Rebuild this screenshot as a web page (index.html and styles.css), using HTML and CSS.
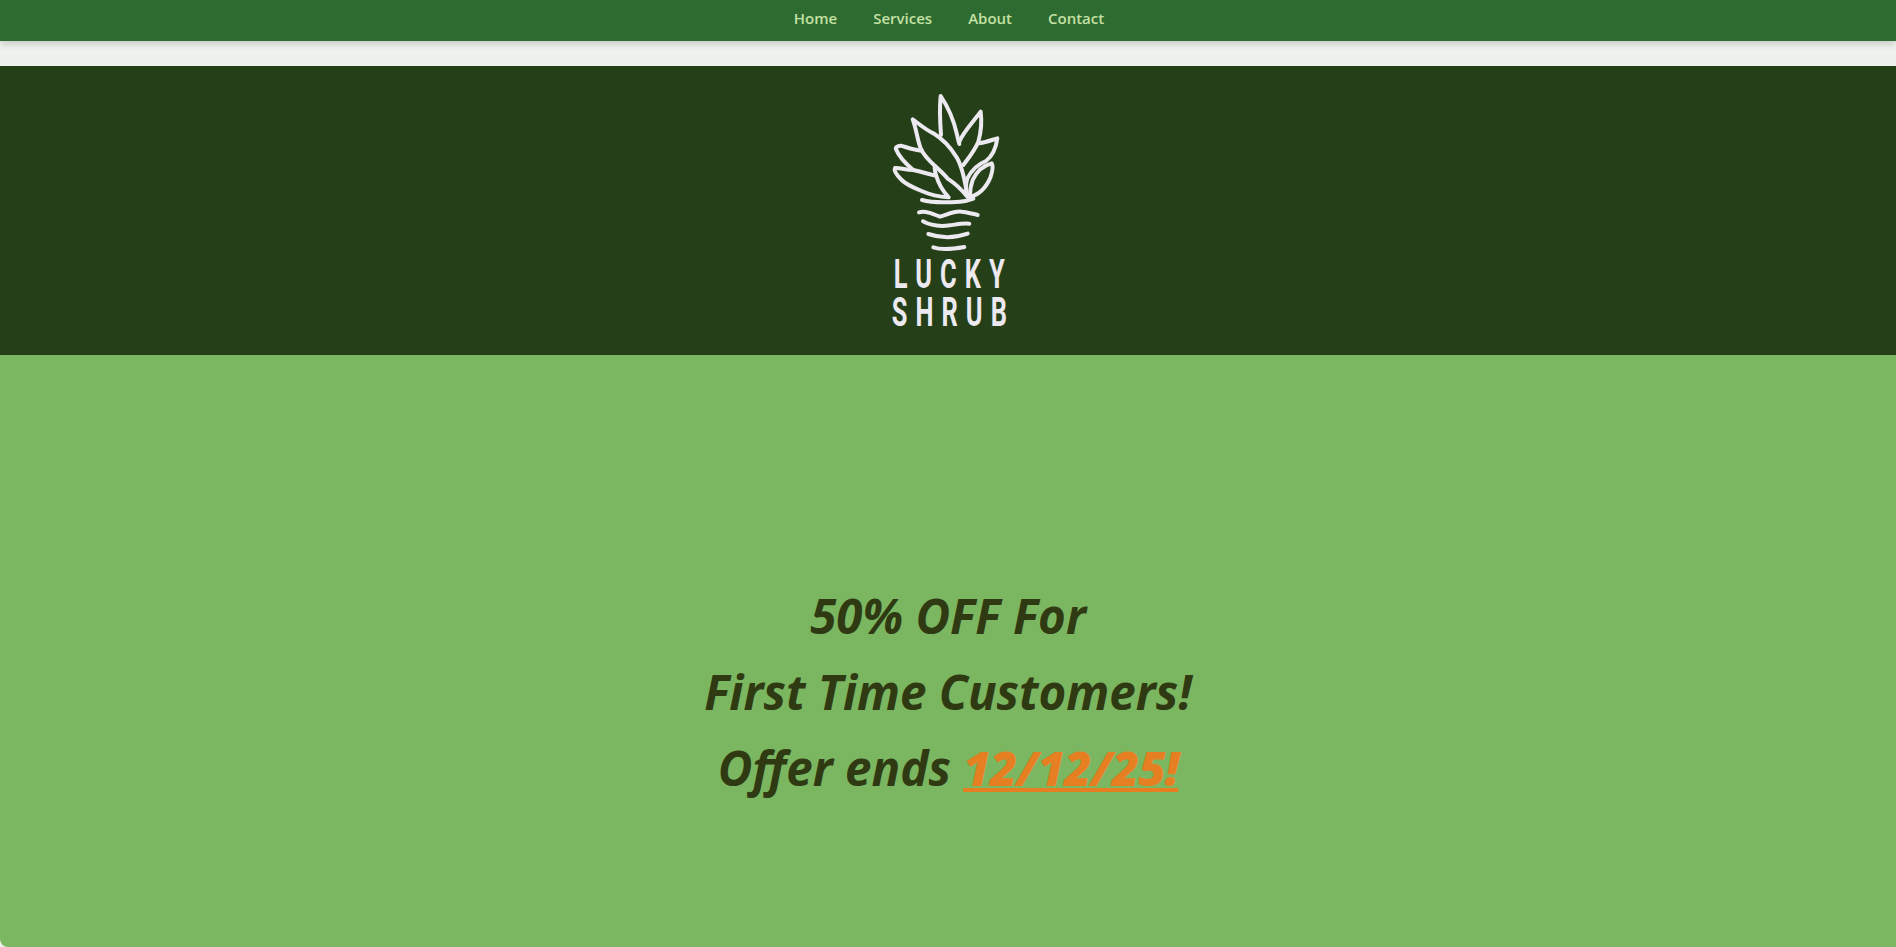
FILE: index.html
```html
<!DOCTYPE html>
<html lang="en">
<head>
    <meta charset="UTF-8">
    <meta name="viewport" content="width=device-width, initial-scale=1.0">
    <title>Lucky Shrub</title>
    <link rel="stylesheet" href="styles.css">
</head>
<body>
    <nav class="topnav">
        <a href="#">Home</a>
        <a href="#">Services</a>
        <a href="#">About</a>
        <a href="#">Contact</a>
    </nav>

    <header class="banner">
        <svg class="logo-mark" viewBox="-6 0 540 540" width="180" height="180" fill="none" stroke="#ece9f0" stroke-width="12" stroke-linecap="round" stroke-linejoin="round">
            <!-- leaves -->
            <path d="M243 165C240 125 238 85 242 48C260 75 280 115 290 160C293 172 295 182 298 192"/>
            <path d="M158 118C175 130 195 148 220 160C245 175 270 200 290 232C305 258 315 300 322 350C310 335 285 310 262 295C250 280 235 268 225 258C205 240 190 225 182 205C172 180 170 150 158 118Z"/>
            <path d="M298 185C310 155 340 125 362 95C366 125 362 160 355 185C345 210 325 235 310 255"/>
            <path d="M355 190C375 188 395 180 412 175C408 205 395 230 378 243C355 252 335 270 322 295C317 312 317 330 320 345"/>
            <path d="M325 352C358 345 380 320 392 290C398 272 400 258 395 250C372 256 350 274 338 300C332 316 330 332 330 346"/>
            <path d="M185 212C160 210 135 200 122 197C112 198 106 202 108 208C115 225 135 250 160 270"/>
            <path d="M160 270C135 270 118 262 105 264C100 272 110 285 125 300C140 315 165 325 185 333C205 342 235 350 266 352C250 335 235 310 228 285C225 275 222 265 225 258"/>
            <path d="M160 270C180 275 200 280 222 286"/>
            <!-- pot -->
            <path d="M186 360C210 367 260 368 300 365C315 364 330 360 340 356"/>
            <path d="M177 397C195 392 215 400 240 410C260 405 280 392 305 395C322 396 340 402 353 405"/>
            <path d="M189 424C210 436 240 440 270 436C290 433 310 429 328 431"/>
            <path d="M205 462C240 474 285 474 323 461"/>
            <path d="M220 502C245 511 280 507 313 501"/>
        </svg>
        <div class="logo-text">
            <span>LUCKY</span>
            <span>SHRUB</span>
        </div>
    </header>

    <main class="promo">
        <h1>50% OFF For<br>First Time Customers!<br>Offer ends <a href="#">12/12/25!</a></h1>
    </main>
</body>
</html>
```
FILE: styles.css
```css
html {
    background-color: #fff;
}
body {
    font-family: "Open Sans", "Noto Sans", sans-serif;
    margin: 0;
    padding: 0;
    height: 947px;
    display: flex;
    flex-direction: column;
    background-color: #eef2ec;
    overflow: hidden;
}
.topnav {
    height: 41px;
    display: flex;
    justify-content: center;
    align-items: center;
    gap: 36px;
    background-color: #2e6b30;
    box-shadow: 0 2px 8px rgba(0,0,0,0.2);
    padding-bottom: 6px;
    padding-left: 2px;
    box-sizing: border-box;
}
.topnav a {
    color: #c5e1a5;
    text-decoration: none;
    font-size: 15px;
    font-weight: 600;
}
.banner {
    margin-top: 25px;
    height: 289px;
    background-color: #254018;
    display: flex;
    flex-direction: column;
    align-items: center;
    padding-top: 14px;
    box-sizing: border-box;
}
.logo-mark {
    display: block;
    flex: none;
}
.logo-text {
    display: flex;
    flex-direction: column;
    align-items: center;
    color: #ece9f0;
    font-family: "Roboto", sans-serif;
    font-size: 41px;
    font-weight: 700;
    line-height: 38px;
    letter-spacing: 13px;
    margin-top: -5px;
    margin-left: 10px;
    transform: scaleX(0.62);
}
.promo {
    flex: 1;
    display: flex;
    justify-content: center;
    align-items: center;
    background-color: #7bb661;
    border-radius: 0 0 0 8px;
    padding-top: 81px;
}
.promo h1 {
    margin: 0;
    text-align: center;
    font-size: 47.5px;
    line-height: 76px;
    font-weight: 700;
    font-style: italic;
    color: #2f3a13;
}
.promo a {
    color: #e67e22;
    font-weight: 800;
    letter-spacing: -1px;
    text-decoration-thickness: 4px;
}
```
